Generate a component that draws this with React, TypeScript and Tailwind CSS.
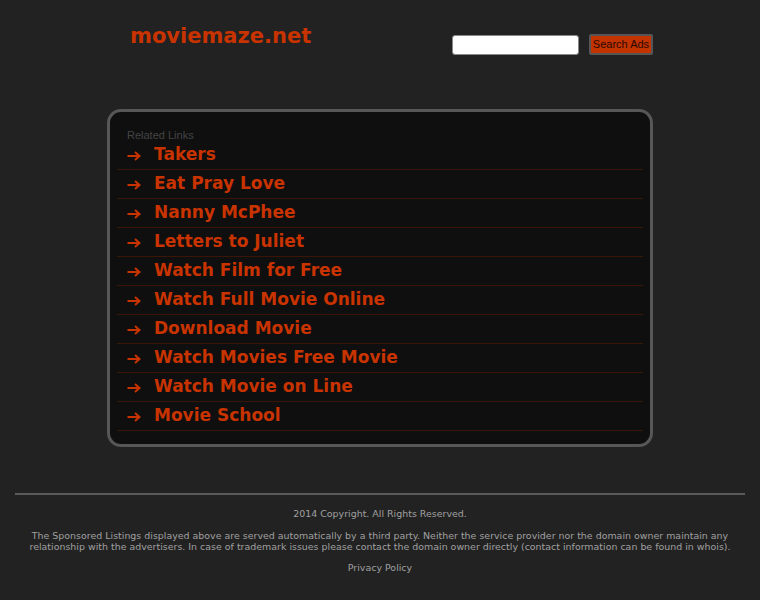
import React from "react";

const links = [
  "Takers",
  "Eat Pray Love",
  "Nanny McPhee",
  "Letters to Juliet",
  "Watch Film for Free",
  "Watch Full Movie Online",
  "Download Movie",
  "Watch Movies Free Movie",
  "Watch Movie on Line",
  "Movie School",
];

function Arrow() {
  return (
    <svg width="14" height="10" viewBox="0 0 14 10" className="mr-[13px] mt-[1px] shrink-0">
      <path d="M0.5 5H12.5M8 1L12.5 5L8 9" fill="none" stroke="#c83300" strokeWidth="2" />
    </svg>
  );
}

export default function App() {
  return (
    <div className="min-h-[600px] w-full bg-[#222222] pb-4 font-['DejaVu_Sans',sans-serif]">
      <div className="mx-auto w-[546px]">
        <div className="flex h-[109px] items-start justify-between">
          <div className="ml-[23px] mt-[23px] text-[21px] font-bold leading-[26px] text-[#c83300]">
            moviemaze.net
          </div>
          <div className="mt-[34px] flex items-center gap-[10px]">
            <input
              type="text"
              className="h-[20px] w-[127px] rounded-[3px] border border-[#888] bg-white"
            />
            <button className="h-[21px] w-[64px] rounded-[2px] border-2 border-[#555] bg-[#c23300] font-['Liberation_Sans',sans-serif] text-[11px] leading-none text-[#2a0a00]">
              Search Ads
            </button>
          </div>
        </div>
        <div className="rounded-[14px] border-[3px] border-[#575757] bg-[#0f0f0f] px-[7px] pb-[13px] pt-[17px]">
          <div className="pl-[10px] font-['Liberation_Sans',sans-serif] text-[11px] leading-[12px] text-[#444]">
            Related Links
          </div>
          {links.map((l) => (
            <div
              key={l}
              className="flex h-[29px] items-center border-b border-[#3a1508] pl-[10px] text-[17px] font-bold text-[#c83300]"
            >
              <Arrow />
              <span>{l}</span>
            </div>
          ))}
        </div>
      </div>
      <div className="mx-[15px] mt-[46px] h-[2px] bg-[#5a5a5a]" />
      <div className="mt-[13px] text-center text-[9.45px] leading-[11px] text-[#a0a0a0]">
        <p>2014 Copyright. All Rights Reserved.</p>
        <p className="mx-auto mt-[11px] w-[720px]">
          The Sponsored Listings displayed above are served automatically by a third party. Neither the service provider nor the domain owner maintain any relationship with the advertisers. In case of trademark issues please contact the domain owner directly (contact information can be found in whois).
        </p>
        <p className="mt-[10px]">Privacy Policy</p>
      </div>
    </div>
  );
}
